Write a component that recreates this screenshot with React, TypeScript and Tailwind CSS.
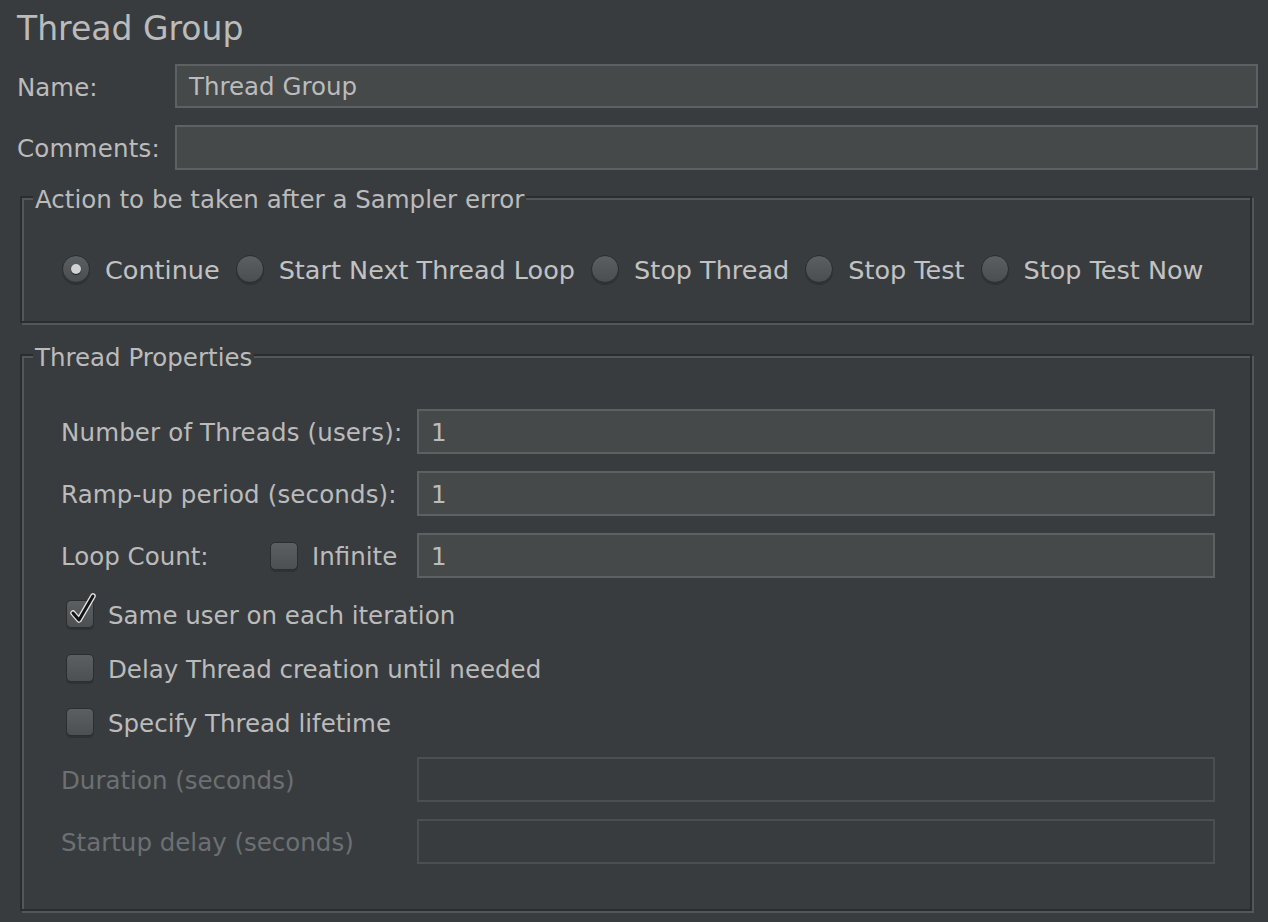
import type { ReactNode } from "react";

const BG = "bg-[#393c3f]";

function TextField({ value = "", disabled = false }: { value?: string; disabled?: boolean }) {
  return (
    <div
      className={
        disabled
          ? "flex h-full flex-1 items-center border-2 border-[#4c4f51] px-[12px]"
          : "flex h-full flex-1 items-center border-2 border-[#5e6163] bg-[#45494a] px-[12px] pt-[3px] text-[#bbbbbb]"
      }
    >
      {value}
    </div>
  );
}

function Radio({ checked = false }: { checked?: boolean }) {
  return (
    <span className="flex h-[28px] w-[28px] shrink-0 items-center justify-center rounded-full border border-[#2b2d2f] bg-[linear-gradient(#5b5f61,#4a4e50)] shadow-[0_2px_0_#2f3133]">
      {checked ? <span className="h-[10px] w-[10px] rounded-full bg-[#d2d2d2] shadow-[0_1px_1px_#1e1e1e]" /> : null}
    </span>
  );
}

function Checkbox({ checked = false }: { checked?: boolean }) {
  return (
    <span className="relative flex h-[28px] w-[28px] shrink-0 rounded-[5px] border border-[#2b2d2f] bg-[linear-gradient(#5b5f61,#4c5052)] shadow-[0_2px_0_#2f3133]">
      {checked ? (
        <svg className="absolute -top-[8px] left-[2px] h-[32px] w-[28px]" viewBox="0 0 28 32" aria-hidden="true">
          <path d="M4 20 L10 27 L24 3" fill="none" stroke="#e6e6e6" strokeWidth="5.5" strokeLinecap="round" strokeLinejoin="round" />
          <path d="M4 20 L10 27 L24 3" fill="none" stroke="#151515" strokeWidth="3" strokeLinecap="round" strokeLinejoin="round" />
        </svg>
      ) : null}
    </span>
  );
}

function Group({ title, className, children }: { title: string; className: string; children: ReactNode }) {
  return (
    <div
      className={`mr-[16px] ml-[20px] border-2 border-[#2a2c2e] shadow-[inset_2px_2px_0_#54575a,2px_2px_0_#54575a] ${className}`}
    >
      <div className={`-mt-[13px] ml-[11px] w-fit px-[2px] leading-[30px] ${BG}`}>{title}</div>
      {children}
    </div>
  );
}

const radios = [
  { label: "Continue", checked: true },
  { label: "Start Next Thread Loop" },
  { label: "Stop Thread" },
  { label: "Stop Test" },
  { label: "Stop Test Now" },
];

const checks = [
  { label: "Same user on each iteration", checked: true },
  { label: "Delay Thread creation until needed" },
  { label: "Specify Thread lifetime" },
];

export default function App() {
  return (
    <div
      className={`h-[922px] w-full overflow-hidden ${BG} font-['DejaVu_Sans','Liberation_Sans',sans-serif] text-[24.5px] text-[#bbbbbb]`}
    >
      <div className="flex h-[56px] items-center pl-[17px] text-[33px] leading-none">Thread Group</div>

      <div className="mt-[8px] mr-[10px] flex h-[44px] items-center pl-[17px]">
        <span className="w-[158px] shrink-0 pt-[4px]">Name:</span>
        <TextField value="Thread Group" />
      </div>
      <div className="mt-[17px] mr-[10px] flex h-[45px] items-center pl-[17px]">
        <span className="w-[158px] shrink-0 pt-[4px] tracking-[0.2px]">Comments:</span>
        <TextField />
      </div>

      <Group title="Action to be taken after a Sampler error" className="mt-[26px] h-[127px]">
        <div className="mt-[32px] flex h-[44px] items-center pl-[40px] text-[25.5px] text-[#c2c2c2]">
          {radios.map((r) => (
            <div key={r.label} className="mr-[16px] flex items-center gap-[15px]">
              <Radio checked={r.checked} />
              <span className="pt-[3px]">{r.label}</span>
            </div>
          ))}
        </div>
      </Group>

      <Group title="Thread Properties" className="mt-[31px] h-[557px]">
        <div className="mt-[36px] flex flex-col gap-[17px] pr-[35px] pl-[39px]">
          <div className="flex h-[45px] items-center">
            <span className="w-[356px] shrink-0 pt-[4px] tracking-[0.15px]">Number of Threads (users):</span>
            <TextField value="1" />
          </div>
          <div className="flex h-[45px] items-center">
            <span className="w-[356px] shrink-0 pt-[4px] tracking-[0.15px]">Ramp-up period (seconds):</span>
            <TextField value="1" />
          </div>
          <div className="flex h-[45px] items-center">
            <div className="flex w-[356px] shrink-0 items-center">
              <span className="w-[209px] shrink-0 pt-[4px]">Loop Count:</span>
              <Checkbox />
              <span className="ml-[14px] pt-[4px]">Infinite</span>
            </div>
            <TextField value="1" />
          </div>
        </div>

        <div className="mt-[16px] flex flex-col gap-[14px] pl-[44px]">
          {checks.map((c) => (
            <div key={c.label} className="flex h-[40px] items-center gap-[14px]">
              <Checkbox checked={c.checked} />
              <span className="pt-[4px]">{c.label}</span>
            </div>
          ))}
        </div>

        <div className="mt-[15px] flex flex-col gap-[17px] pr-[35px] pl-[39px] text-[#6d7072]">
          <div className="flex h-[45px] items-center">
            <span className="w-[356px] shrink-0 pt-[4px]">Duration (seconds)</span>
            <TextField disabled />
          </div>
          <div className="flex h-[45px] items-center">
            <span className="w-[356px] shrink-0 pt-[4px]">Startup delay (seconds)</span>
            <TextField disabled />
          </div>
        </div>
      </Group>
    </div>
  );
}
